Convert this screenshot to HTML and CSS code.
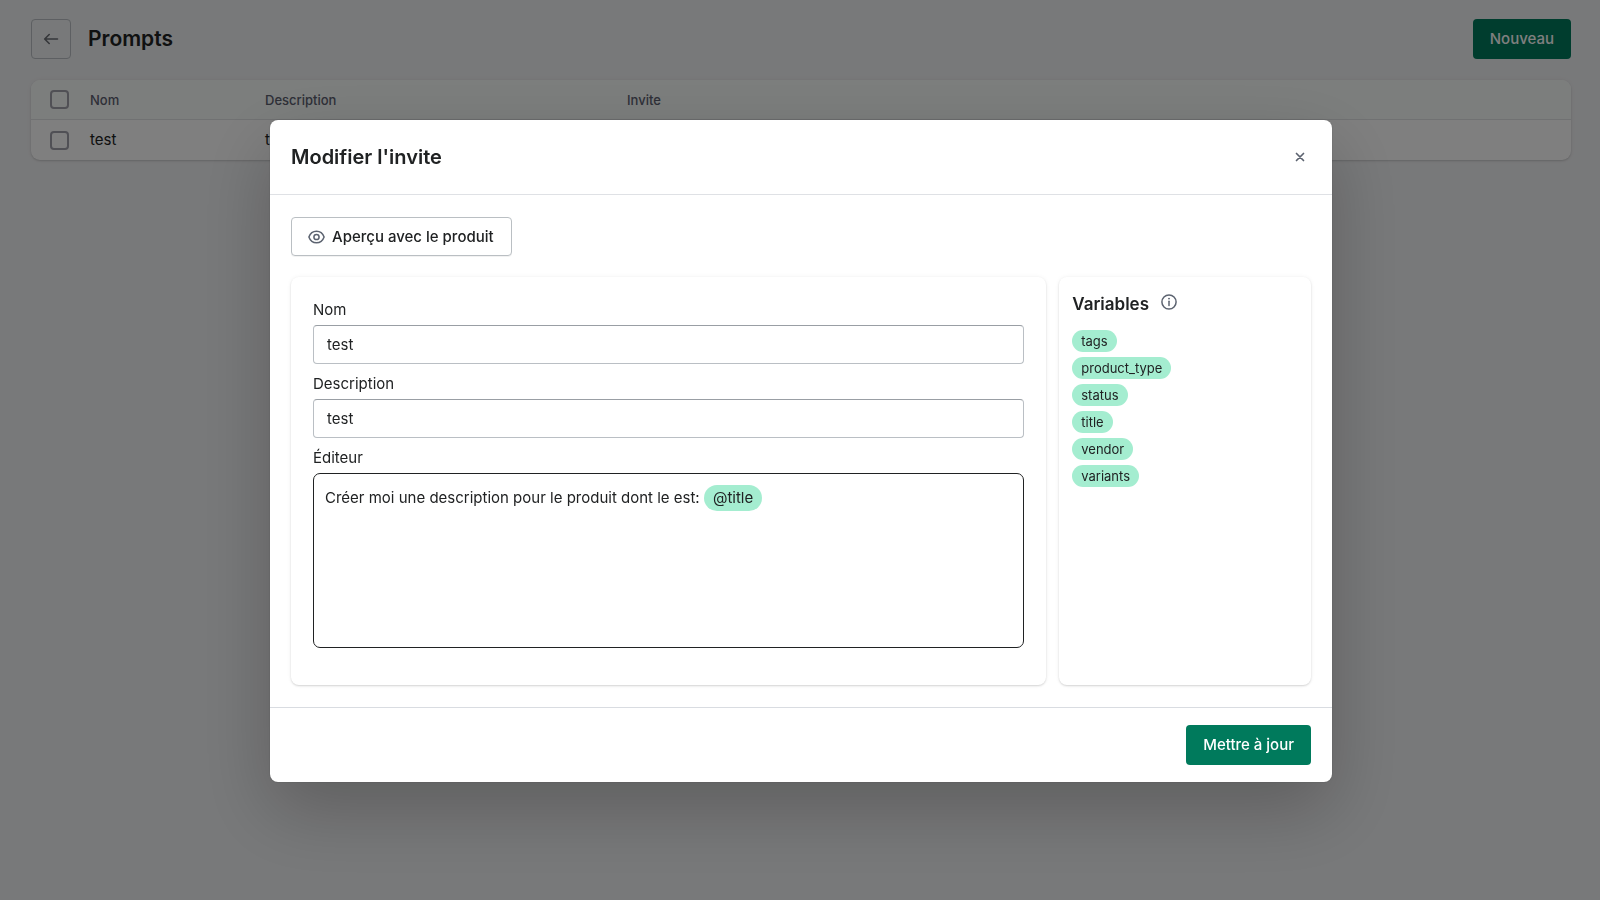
FILE: index.html
```html
<!DOCTYPE html>
<html lang="fr">
<head>
<meta charset="utf-8">
<meta name="viewport" content="width=device-width, initial-scale=1">
<title>Prompts</title>
<link rel="stylesheet" href="styles.css">
</head>
<body>
<main class="page">
  <header class="page-header">
    <button class="back" type="button" aria-label="Retour">
      <svg width="20" height="20" viewBox="0 0 20 20" aria-hidden="true"><path d="M16.500 10H4.200M8.200 5.500 3.700 10l4.500 4.500" fill="none" stroke="currentColor" stroke-width="1.600" stroke-linecap="round" stroke-linejoin="round"/></svg>
    </button>
    <h1 class="page-title">Prompts</h1>
    <button class="button button-primary" type="button">Nouveau</button>
  </header>
  <table class="prompts">
    <colgroup><col class="col-check"><col class="col-name"><col class="col-description"><col></colgroup>
    <thead>
      <tr>
        <th><input class="check" type="checkbox" aria-label="Tout sélectionner"></th>
        <th>Nom</th>
        <th>Description</th>
        <th>Invite</th>
      </tr>
    </thead>
    <tbody>
      <tr>
        <td><input class="check" type="checkbox" aria-label="Sélectionner test"></td>
        <td>test</td>
        <td>test</td>
        <td></td>
      </tr>
    </tbody>
  </table>
</main>

<div class="backdrop">
  <section class="modal" role="dialog" aria-modal="true" aria-labelledby="modal-title">
    <header class="modal-header">
      <h2 class="modal-title" id="modal-title">Modifier l'invite</h2>
      <button class="close" type="button" aria-label="Fermer">
        <svg width="12" height="12" viewBox="0 0 12 12" aria-hidden="true"><path d="M2.500 2.500l7 7M9.500 2.500l-7 7" fill="none" stroke="currentColor" stroke-width="1.700" stroke-linecap="round"/></svg>
      </button>
    </header>
    <div class="modal-body">
      <button class="button button-plain" type="button">
        <svg width="17" height="14" viewBox="0 0 17 14" aria-hidden="true"><g fill="none" stroke="currentColor" stroke-width="1.500"><path d="M.9 7C2.200 3.400 5 1.200 8.500 1.200S14.800 3.400 16.100 7C14.800 10.600 12 12.800 8.500 12.800S2.200 10.600.9 7Z" stroke-linejoin="round"/><circle cx="8.500" cy="7" r="2.600"/></g></svg>
        Aperçu avec le produit
      </button>
      <div class="panels">
        <form class="card form">
          <div class="field">
            <label for="name">Nom</label>
            <input class="text-input" id="name" type="text" value="test">
          </div>
          <div class="field">
            <label for="description">Description</label>
            <input class="text-input" id="description" type="text" value="test">
          </div>
          <div class="field">
            <span id="editor-label">Éditeur</span>
            <div class="editor" contenteditable="true" role="textbox" aria-multiline="true" aria-labelledby="editor-label">Créer moi une description pour le produit dont le est: <span class="mention">@title</span></div>
          </div>
        </form>
        <aside class="card variables">
          <div class="variables-header">
            <h3 class="variables-title">Variables</h3>
            <svg class="info" width="16" height="16" viewBox="0 0 16 16" aria-hidden="true"><circle cx="8" cy="8" r="7.100" fill="none" stroke="currentColor" stroke-width="1.500"/><path d="M8 7.300v4.200" stroke="currentColor" stroke-width="1.500" stroke-linecap="round"/><circle cx="8" cy="4.600" r=".95" fill="currentColor"/></svg>
          </div>
          <ul class="tags">
            <li class="tag">tags</li>
            <li class="tag">product_type</li>
            <li class="tag">status</li>
            <li class="tag">title</li>
            <li class="tag">vendor</li>
            <li class="tag">variants</li>
          </ul>
        </aside>
      </div>
    </div>
    <footer class="modal-footer">
      <button class="button button-primary" type="button">Mettre à jour</button>
    </footer>
  </section>
</div>
</body>
</html>
```
FILE: styles.css
```css
* {
  box-sizing: border-box;
}

body {
  margin: 0;
  min-height: 100vh;
  background: #f1f2f4;
  color: #202223;
  font: 400 15px/22px Inter, "Liberation Sans", sans-serif;
}

h1, h2, h3, ul {
  margin: 0;
  padding: 0;
}

button, input {
  font: inherit;
  color: inherit;
}

.page {
  padding: 19px 29px 0 31px;
}

.page-header {
  display: flex;
  align-items: center;
  gap: 17px;
  margin-bottom: 21px;
}

.back {
  display: grid;
  place-items: center;
  width: 40px;
  height: 40px;
  padding: 0;
  border: 1px solid #babfc4;
  border-radius: 4px;
  background: transparent;
  color: #6a6e74;
}

.page-title {
  flex: 1;
  font-size: 21px;
  font-weight: 600;
  line-height: 30px;
}

.button {
  display: inline-flex;
  align-items: center;
  gap: 7px;
  height: 40px;
  padding: 0 17px;
  border: 0;
  border-radius: 4px;
  font-weight: 500;
}

.button-primary {
  background: #007a5c;
  color: #fff;
}

.button-plain {
  height: 39px;
  padding: 0 17px 0 16px;
  border: 1px solid #babfc3;
  background: #fff;
  box-shadow: 0 1px 0 rgba(0, 0, 0, 0.05);
}

.button-plain svg {
  color: #5c6370;
}

.prompts {
  width: 100%;
  table-layout: fixed;
  border-spacing: 0;
  border-radius: 9px;
  background: #fff;
  box-shadow: 0 0 5px rgba(23, 24, 24, 0.05), 0 1px 2px rgba(0, 0, 0, 0.15);
}

.col-check {
  width: 59px;
}

.col-name {
  width: 175px;
}

.col-description {
  width: 362px;
}

.prompts th,
.prompts td {
  height: 40px;
  padding: 0;
  text-align: left;
}

.prompts th {
  border-bottom: 1px solid #e1e3e5;
  background: #f9fcfa;
  color: #5c6070;
  font-size: 13px;
  font-weight: 500;
}

.prompts th:first-child {
  border-top-left-radius: 9px;
}

.prompts th:last-child {
  border-top-right-radius: 9px;
}

.prompts th:first-child,
.prompts td:first-child {
  padding-left: 19px;
}

.check {
  display: block;
  appearance: none;
  width: 19px;
  height: 19px;
  margin: 0;
  border: 2px solid #a0a0aa;
  border-radius: 4px;
}

.backdrop {
  position: fixed;
  inset: 0;
  display: grid;
  place-items: center;
  padding: 2px 0 0 2px;
  background: rgba(0, 0, 0, 0.5);
}

.modal {
  width: 1062px;
  max-width: 96%;
  border-radius: 8px;
  background: #fff;
  box-shadow: 0 28px 72px rgba(0, 0, 0, 0.22), 0 0 2px rgba(0, 0, 0, 0.2);
}

.modal-header {
  display: flex;
  align-items: center;
  justify-content: space-between;
  padding: 22px 21px;
  border-bottom: 1px solid #dfe1e5;
}

.modal-title {
  font-size: 20px;
  font-weight: 600;
  line-height: 30px;
}

.close {
  display: grid;
  place-items: center;
  width: 22px;
  height: 22px;
  padding: 0;
  border: 0;
  background: transparent;
  color: #5c6370;
}

.modal-body {
  padding: 22px 21px;
}

.panels {
  display: grid;
  grid-template-columns: 3fr 1fr;
  gap: 13px;
  margin-top: 21px;
}

.card {
  border-radius: 8px;
  box-shadow: 0 0 5px rgba(23, 24, 24, 0.05), 0 1px 2px rgba(0, 0, 0, 0.15);
}

.form {
  display: grid;
  gap: 9px;
  padding: 22px 22px 37px;
}

.field {
  display: grid;
  gap: 4px;
}

.text-input {
  width: 100%;
  height: 39px;
  padding: 0 13px;
  border: 1px solid #babfc4;
  border-top-color: #999ea4;
  border-radius: 4px;
  background: #fff;
}

.editor {
  min-height: 175px;
  padding: 11px;
  border: 1px solid #202223;
  border-radius: 7px;
  line-height: 26px;
}

.mention {
  display: inline-block;
  padding: 0 9px;
  border-radius: 13px;
  background: #a4edd0;
}

.variables {
  padding: 13px;
}

.variables-header {
  display: flex;
  gap: 12px;
  margin-bottom: 12px;
}

.variables-title {
  font-size: 17px;
  font-weight: 600;
  line-height: 28px;
}

.info {
  margin-top: 4px;
  color: #5c6370;
}

.tags {
  display: grid;
  justify-items: start;
  gap: 5px;
  list-style: none;
}

.tag {
  padding: 0 9px;
  border-radius: 11px;
  background: #a4edd0;
  font-size: 13px;
}

.modal-footer {
  display: flex;
  justify-content: flex-end;
  padding: 17px 21px;
  border-top: 1px solid #d9dce1;
}
```
